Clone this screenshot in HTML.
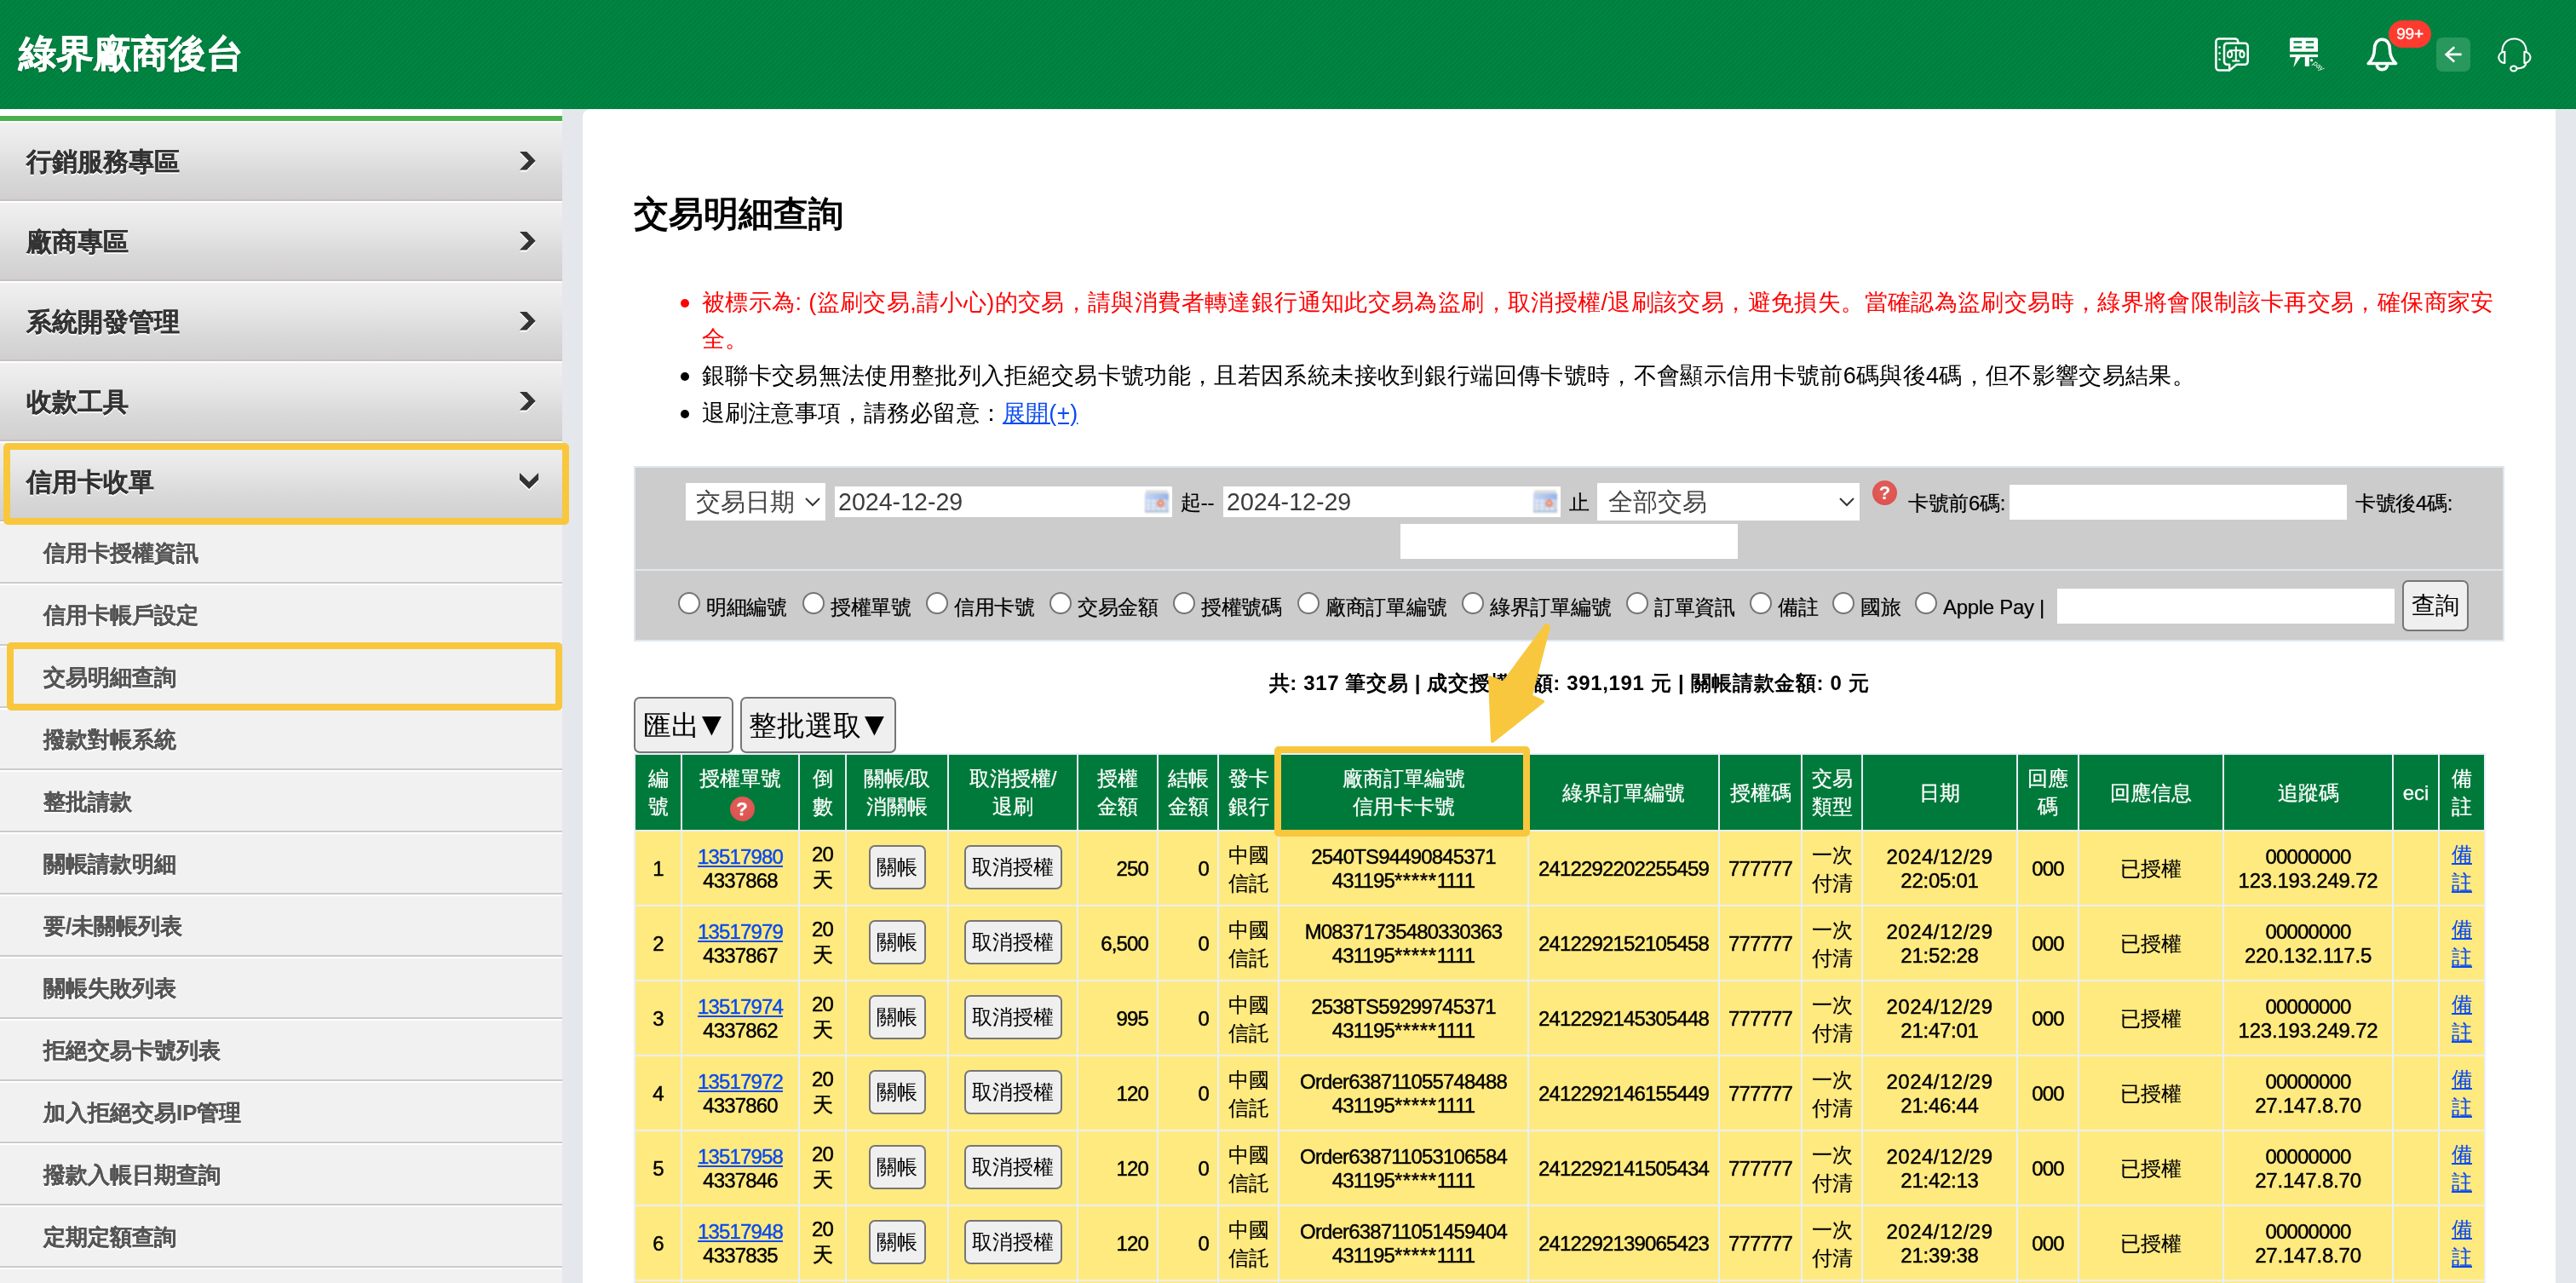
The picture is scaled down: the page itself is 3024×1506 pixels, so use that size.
<!DOCTYPE html><html lang="zh-Hant-TW"><head><meta charset="utf-8"><title>交易明細查詢</title><style>
*{box-sizing:border-box;margin:0;padding:0}
html,body{width:3024px;height:1506px;background:#fff}
body{font-family:"Liberation Sans",sans-serif;color:#000}
#page{position:relative;width:3024px;height:1506px;overflow:hidden;background:#fff;will-change:transform}
.a{position:absolute;white-space:nowrap}
#hdr{left:0;top:0;width:3024px;height:128px;background:#008140 repeating-linear-gradient(135deg,#007e3e 0,#007e3e 2.12px,#008542 2.12px,#008542 4.24px)}
#ttl{left:22px;top:30px;height:66px;line-height:66px;font-size:44.4px;font-weight:bold;color:#fff;text-shadow:0 1px 2px rgba(0,60,20,.45);-webkit-text-stroke:0.5px #fff}
#side{left:0;top:128px;width:660px;height:1378px;background:#f1f1f1;overflow:hidden}
#sidetop{left:0;top:0;width:660px;height:8px;background:#fff}
#sideln{left:0;top:8px;width:660px;height:6px;background:#48b14b}
.mi{left:0;width:660px;height:94px;background:linear-gradient(#f0f0f0 0,#e6e6e6 35%,#d9d8d8 70%,#d1cfcf 100%);border-top:2px solid #fff;border-bottom:2px solid #c4c2c2}
.mi span{left:31px;top:0;height:92px;line-height:92px;font-size:29.7px;font-weight:bold;color:#333;text-shadow:0 2px 0 #fff;-webkit-text-stroke:0.25px #333}
.mi svg{position:absolute}
.si{left:0;width:660px;height:73px;background:#f1f1f1;border-top:2px solid #fff;border-bottom:2px solid #cbcbcb}
.si span{left:51px;top:0;height:71px;line-height:71px;font-size:25.7px;font-weight:bold;color:#555;text-shadow:0 2px 0 #fff;-webkit-text-stroke:0.2px #555}
.hl{border:8px solid #f8c73e;border-radius:5px}
#gap{left:660px;top:128px;width:40px;height:1378px;background:#e4e7eb}
#rstrip{left:3000px;top:128px;width:24px;height:1378px;background:#e4e7eb}
#main{left:684px;top:128px;width:2316px;height:1378px;background:#fff;border-top-left-radius:9px}
#h2{left:744px;top:221px;height:60px;line-height:60px;font-size:40.6px;font-weight:bold}
.nt{left:824px;height:44px;line-height:44px;font-size:27px}
.dot{width:10px;height:10px;border-radius:5px;left:799px}
a,.lk{color:#0a4af0;text-decoration:underline}
#ft{left:744px;top:547px;width:2196px;height:206px;background:#dfe6ef}
.fc{left:2px;width:2192px;background:#ccc}
.wb{background:#fff}
.t24{font-size:24px;height:34px;line-height:34px;letter-spacing:-0.3px;-webkit-text-stroke:0.2px}
.rd{width:26px;height:26px;border-radius:13px;background:#fff;border:2px solid #757575}
.btn{background:#efefef;border:2px solid #767676;border-radius:7px;text-align:center}
#sum{left:1242px;width:1200px;text-align:center;top:784px;height:36px;line-height:36px;font-size:24px;font-weight:bold;letter-spacing:0.65px}
table{position:absolute;left:744px;top:884px;border-collapse:separate;border-spacing:2px;table-layout:fixed;width:2174px;background:#e9eff9;font-size:24px}
th,td{padding:0;text-align:center;vertical-align:middle;overflow:hidden;white-space:nowrap;font-weight:normal}
th{background:#007a3b;color:#fff;height:88px;line-height:33px;-webkit-text-stroke:0.25px #fff}
td{background:#ffea80;height:86px;padding-top:2px;line-height:28px;letter-spacing:-0.85px;-webkit-text-stroke:0.45px}
td.r{text-align:right;padding-right:10px}
td.c{padding-top:1px;line-height:33px;letter-spacing:0;-webkit-text-stroke:0.15px}
td.m{line-height:30px;padding-top:0;padding-bottom:2px}
td .btn{-webkit-text-stroke:0;position:relative;top:-2px;display:inline-block;height:52px;line-height:47px;vertical-align:middle;letter-spacing:0;font-size:24px}
.q{display:inline-block;border-radius:50%;background:radial-gradient(circle at 50% 35%,#e2605c,#d94f4c);color:#fff;font-weight:bold;text-align:center}
</style></head><body><div id="page">
<div id="hdr" class="a"><div id="ttl" class="a">綠界廠商後台</div>
<svg class="a" style="left:2600px;top:44px" width="40" height="40" viewBox="0 0 40 40" fill="none" stroke="#fff" stroke-width="2.5" stroke-linejoin="round"><path d="M27.2 6 V5 a3.6 3.6 0 0 0 -3.6 -3.6 H5 a3.6 3.6 0 0 0 -3.6 3.6 V35 a3.6 3.6 0 0 0 3.6 3.6 H17"/><path d="M14.5 6.7 H35.2 a3.5 3.5 0 0 1 3.5 3.5 V28.3 a3.5 3.5 0 0 1 -3.5 3.5 H25.5 L17.2 38.6 V31.8 H14.5 a3.5 3.5 0 0 1 -3.5 -3.5 V10.2 a3.5 3.5 0 0 1 3.5 -3.5 Z"/><g stroke="none" fill="#fff"><circle cx="5.6" cy="11.5" r="1.3"/><circle cx="5.6" cy="18.6" r="1.3"/><circle cx="5.6" cy="25.8" r="1.3"/></g><g stroke-width="2"><path d="M24.8 10.5 V27.5 M16.8 15.3 H33.4 M20.3 27.6 H29.3"/><ellipse cx="17.6" cy="19.8" rx="2.6" ry="3.6"/><ellipse cx="32" cy="19.8" rx="2.6" ry="3.6"/></g></svg>
<svg class="a" style="left:2688px;top:44px" width="42" height="42" viewBox="0 0 42 42" fill="#fff"><path fill-rule="evenodd" d="M2.2 0.2 H30.8 a2.2 2.2 0 0 1 2.2 2.2 V16.7 H0 V2.4 a2.2 2.2 0 0 1 2.2 -2.2 Z M4.5 4.2 H14.2 V6.5 H4.5 Z M18.8 4.2 H28.2 V6.5 H18.8 Z M4.5 10.4 H14.2 V12.7 H4.5 Z M18.8 10.4 H28.2 V12.7 H18.8 Z"/><rect x="0" y="19.9" width="33" height="3.2"/><path d="M7 23 H12.6 L4.3 35.2 Z"/><rect x="17.8" y="23" width="5" height="10.8"/><circle cx="25.6" cy="26.7" r="1.6"/><text x="0" y="0" transform="translate(26.8 31.2) rotate(38)" font-family="Liberation Sans, sans-serif" font-style="italic" font-size="8.6">pay</text></svg>
<svg class="a" style="left:2778px;top:44px" width="40" height="42" viewBox="0 0 40 42" fill="none" stroke="#fff" stroke-width="3.6" stroke-linejoin="round" stroke-linecap="round"><path d="M18.4 2.2 C12.4 2.2 9.4 7.6 9.4 13.6 C9.4 21.8 7 26.2 2.2 30.5 H34.6 C29.8 26.2 27.4 21.8 27.4 13.6 C27.4 7.6 24.4 2.2 18.4 2.2 Z"/><path d="M12.4 33 A6.2 6.2 0 0 0 24.4 33"/></svg>
<div class="a" style="left:2804px;top:24px;width:50px;height:32px;border-radius:16px;background:#ff3b30;color:#fff;font-size:19px;line-height:32px;text-align:center;letter-spacing:-0.2px;-webkit-text-stroke:0.4px #fff">99+</div>
<div class="a" style="left:2860px;top:44px;width:40px;height:40px;border-radius:7px;background:#28985d"></div>
<svg class="a" style="left:2860px;top:44px" width="40" height="40" viewBox="0 0 40 40" fill="none" stroke="#fff" stroke-width="2.6"><path d="M29.6 19.9 H12 M21.2 11.3 L11.6 19.9 L21.2 28.5"/></svg>
<svg class="a" style="left:2932px;top:44px" width="42" height="42" viewBox="0 0 42 42" fill="none" stroke="#fff" stroke-width="2.1"><path d="M5.3 17 C5.3 7.5 11 1.5 19.5 1.5 C28 1.5 33.7 7.5 33.7 17"/><path d="M8.3 16.7 V30 A7.1 6.65 0 0 1 8.3 16.7 Z M31.4 16.7 V30 A7.1 6.65 0 0 0 31.4 16.7 Z" stroke-linejoin="round"/><path d="M33.2 29.6 C33.2 34 30 36.4 22.4 36.4"/><ellipse cx="18.8" cy="36.5" rx="3.6" ry="3"/></svg>

</div>
<div id="side" class="a"><div id="sidetop" class="a"></div><div id="sideln" class="a"></div>
<div class="a mi" style="top:14px"><span class="a">行銷服務專區</span><svg style="left:610px;top:34px" width="20" height="25" viewBox="0 0 20 25"><path d="M0 0 L8.3 0 L18.7 10.7 L8.3 21.5 L0 21.5 L10.5 10.7 Z" transform="translate(0 2)" fill="#fff"/><path d="M0 0 L8.3 0 L18.7 10.7 L8.3 21.5 L0 21.5 L10.5 10.7 Z" fill="#333"/></svg></div>
<div class="a mi" style="top:108px"><span class="a">廠商專區</span><svg style="left:610px;top:34px" width="20" height="25" viewBox="0 0 20 25"><path d="M0 0 L8.3 0 L18.7 10.7 L8.3 21.5 L0 21.5 L10.5 10.7 Z" transform="translate(0 2)" fill="#fff"/><path d="M0 0 L8.3 0 L18.7 10.7 L8.3 21.5 L0 21.5 L10.5 10.7 Z" fill="#333"/></svg></div>
<div class="a mi" style="top:202px"><span class="a">系統開發管理</span><svg style="left:610px;top:34px" width="20" height="25" viewBox="0 0 20 25"><path d="M0 0 L8.3 0 L18.7 10.7 L8.3 21.5 L0 21.5 L10.5 10.7 Z" transform="translate(0 2)" fill="#fff"/><path d="M0 0 L8.3 0 L18.7 10.7 L8.3 21.5 L0 21.5 L10.5 10.7 Z" fill="#333"/></svg></div>
<div class="a mi" style="top:296px"><span class="a">收款工具</span><svg style="left:610px;top:34px" width="20" height="25" viewBox="0 0 20 25"><path d="M0 0 L8.3 0 L18.7 10.7 L8.3 21.5 L0 21.5 L10.5 10.7 Z" transform="translate(0 2)" fill="#fff"/><path d="M0 0 L8.3 0 L18.7 10.7 L8.3 21.5 L0 21.5 L10.5 10.7 Z" fill="#333"/></svg></div>
<div class="a mi" style="top:390px"><span class="a">信用卡收單</span><svg style="left:610px;top:35px" width="23" height="23" viewBox="0 0 23 23"><path d="M0 0 L11.1 10.7 L22.1 0 L22.1 8.2 L11.1 19.1 L0 8.2 Z" transform="translate(0 2)" fill="#fff"/><path d="M0 0 L11.1 10.7 L22.1 0 L22.1 8.2 L11.1 19.1 L0 8.2 Z" fill="#333"/></svg></div>
<div class="a si" style="top:484px"><span class="a">信用卡授權資訊</span></div>
<div class="a si" style="top:557px"><span class="a">信用卡帳戶設定</span></div>
<div class="a si" style="top:630px"><span class="a">交易明細查詢</span></div>
<div class="a si" style="top:703px"><span class="a">撥款對帳系統</span></div>
<div class="a si" style="top:776px"><span class="a">整批請款</span></div>
<div class="a si" style="top:849px"><span class="a">關帳請款明細</span></div>
<div class="a si" style="top:922px"><span class="a">要/未關帳列表</span></div>
<div class="a si" style="top:995px"><span class="a">關帳失敗列表</span></div>
<div class="a si" style="top:1068px"><span class="a">拒絕交易卡號列表</span></div>
<div class="a si" style="top:1141px"><span class="a">加入拒絕交易IP管理</span></div>
<div class="a si" style="top:1214px"><span class="a">撥款入帳日期查詢</span></div>
<div class="a si" style="top:1287px"><span class="a">定期定額查詢</span></div>
<div class="a si" style="top:1360px"><span class="a"></span></div>
</div>
<div id="gap" class="a"></div><div id="rstrip" class="a"></div>
<div id="main" class="a"></div>
<div class="a hl" style="left:4px;top:520px;width:664px;height:96px"></div>
<div class="a hl" style="left:8px;top:754px;width:652px;height:80px"></div>
<div id="h2" class="a">交易明細查詢</div>
<div class="a dot" style="top:351px;background:#f00"></div><div class="a nt" style="top:333px;color:#f00;letter-spacing:0.380px">被標示為: (盜刷交易,請小心)的交易，請與消費者轉達銀行通知此交易為盜刷，取消授權/退刷該交易，避免損失。當確認為盜刷交易時，綠界將會限制該卡再交易，確保商家安</div>
<div class="a nt" style="top:376px;color:#f00;letter-spacing:0.000px">全。</div>
<div class="a dot" style="top:437px;background:#000"></div><div class="a nt" style="top:419px;color:#000;letter-spacing:0.340px">銀聯卡交易無法使用整批列入拒絕交易卡號功能，且若因系統未接收到銀行端回傳卡號時，不會顯示信用卡號前6碼與後4碼，但不影響交易結果。</div>
<div class="a dot" style="top:481px;background:#000"></div><div class="a nt" style="top:463px;color:#000;letter-spacing:0.150px">退刷注意事項，請務必留意：<span class="lk">展開(+)</span></div>
<div id="ft" class="a">
<div class="a fc" style="top:2px;height:119px">
<div class="a wb" style="left:59px;top:18px;width:164px;height:44px"><div class="a" style="left:12px;top:0;height:44px;line-height:44px;font-size:29px;color:#444">交易日期</div><svg class="a" style="left:139px;top:15px" width="20" height="14" viewBox="0 0 20 14"><path d="M2 3 L10 11 L18 3" fill="none" stroke="#333" stroke-width="2"/></svg></div>
<div class="a wb" style="left:234px;top:22px;width:396px;height:36px"><div class="a" style="left:4px;top:0;height:36px;line-height:37px;font-size:28.6px;color:#3c3c3c">2024-12-29</div><svg class="a" style="left:363px;top:4px;filter:blur(0.8px)" width="30" height="28" viewBox="0 0 30 28"><defs><linearGradient id="cg" x1="0" y1="0" x2="1" y2="0"><stop offset="0" stop-color="#c6d6f6"/><stop offset="1" stop-color="#93b2ea"/></linearGradient></defs><rect x="2" y="0.5" width="26" height="5" fill="#d9dcdb"/><rect x="1" y="4.5" width="28" height="22" fill="#c5d3ea"/><rect x="1" y="4.5" width="28" height="7" fill="url(#cg)"/><rect x="1" y="23.5" width="28" height="3" fill="#b3c2d6"/><g fill="#e4ebf8"><rect x="3" y="11.5" width="4" height="3"/><rect x="9" y="11.5" width="4" height="3"/><rect x="15" y="11.5" width="4" height="3"/><rect x="21" y="11.5" width="4" height="3"/><rect x="3" y="16.5" width="4" height="3"/><rect x="9" y="16.5" width="4" height="3"/><rect x="3" y="21" width="4" height="3"/><rect x="9" y="21" width="4" height="3"/><rect x="15" y="21" width="4" height="3"/><rect x="21" y="21" width="4" height="3"/></g><circle cx="19.6" cy="15.6" r="4.3" fill="#ea8a6e"/><circle cx="19.6" cy="15.6" r="1.4" fill="#fce9e0"/></svg></div>
<div class="a t24" style="left:640px;top:24px">起--</div>
<div class="a wb" style="left:690px;top:22px;width:396px;height:36px"><div class="a" style="left:4px;top:0;height:36px;line-height:37px;font-size:28.6px;color:#3c3c3c">2024-12-29</div><svg class="a" style="left:363px;top:4px;filter:blur(0.8px)" width="30" height="28" viewBox="0 0 30 28"><defs><linearGradient id="cg2" x1="0" y1="0" x2="1" y2="0"><stop offset="0" stop-color="#c6d6f6"/><stop offset="1" stop-color="#93b2ea"/></linearGradient></defs><rect x="2" y="0.5" width="26" height="5" fill="#d9dcdb"/><rect x="1" y="4.5" width="28" height="22" fill="#c5d3ea"/><rect x="1" y="4.5" width="28" height="7" fill="url(#cg2)"/><rect x="1" y="23.5" width="28" height="3" fill="#b3c2d6"/><g fill="#e4ebf8"><rect x="3" y="11.5" width="4" height="3"/><rect x="9" y="11.5" width="4" height="3"/><rect x="15" y="11.5" width="4" height="3"/><rect x="21" y="11.5" width="4" height="3"/><rect x="3" y="16.5" width="4" height="3"/><rect x="9" y="16.5" width="4" height="3"/><rect x="3" y="21" width="4" height="3"/><rect x="9" y="21" width="4" height="3"/><rect x="15" y="21" width="4" height="3"/><rect x="21" y="21" width="4" height="3"/></g><circle cx="19.6" cy="15.6" r="4.3" fill="#ea8a6e"/><circle cx="19.6" cy="15.6" r="1.4" fill="#fce9e0"/></svg></div>
<div class="a t24" style="left:1096px;top:24px">止</div>
<div class="a wb" style="left:1129px;top:18px;width:308px;height:44px"><div class="a" style="left:13px;top:0;height:44px;line-height:44px;font-size:29px;color:#444">全部交易</div><svg class="a" style="left:283px;top:15px" width="20" height="14" viewBox="0 0 20 14"><path d="M2 3 L10 11 L18 3" fill="none" stroke="#333" stroke-width="2"/></svg></div>
<div class="a q" style="left:1452px;top:15px;width:29px;height:29px;line-height:29px;font-size:22px">?</div>
<div class="a t24" style="left:1494px;top:25px">卡號前6碼:</div>
<div class="a wb" style="left:1613px;top:20px;width:396px;height:41px"></div>
<div class="a t24" style="left:2019px;top:25px">卡號後4碼:</div>
<div class="a wb" style="left:898px;top:66px;width:396px;height:41px"></div>
</div>
<div class="a fc" style="top:123px;height:81px">
<div class="a rd" style="left:50px;top:25px"></div><div class="a t24" style="left:83px;top:26px">明細編號</div>
<div class="a rd" style="left:196px;top:25px"></div><div class="a t24" style="left:229px;top:26px">授權單號</div>
<div class="a rd" style="left:341px;top:25px"></div><div class="a t24" style="left:374px;top:26px">信用卡號</div>
<div class="a rd" style="left:486px;top:25px"></div><div class="a t24" style="left:519px;top:26px">交易金額</div>
<div class="a rd" style="left:631px;top:25px"></div><div class="a t24" style="left:664px;top:26px">授權號碼</div>
<div class="a rd" style="left:777px;top:25px"></div><div class="a t24" style="left:810px;top:26px">廠商訂單編號</div>
<div class="a rd" style="left:970px;top:25px"></div><div class="a t24" style="left:1003px;top:26px">綠界訂單編號</div>
<div class="a rd" style="left:1163px;top:25px"></div><div class="a t24" style="left:1196px;top:26px">訂單資訊</div>
<div class="a rd" style="left:1308px;top:25px"></div><div class="a t24" style="left:1341px;top:26px">備註</div>
<div class="a rd" style="left:1405px;top:25px"></div><div class="a t24" style="left:1438px;top:26px">國旅</div>
<div class="a rd" style="left:1502px;top:25px"></div><div class="a t24" style="left:1535px;top:26px">Apple Pay |</div>
<div class="a wb" style="left:1669px;top:21px;width:396px;height:41px"></div>
<div class="a btn" style="left:2074px;top:11px;width:78px;height:60px;line-height:56px;font-size:28px">查詢</div>
</div>
</div>
<div id="sum" class="a">共: 317 筆交易 | 成交授權金額: 391,191 元 | 關帳請款金額: 0 元</div>
<div class="a btn" style="left:744px;top:818px;width:117px;height:66px;line-height:65px;font-size:32.5px;text-align:left;padding-left:9px">匯出<svg class="a" style="left:78px;top:21px" width="23" height="23" viewBox="0 0 23 23"><path d="M0 0 H22.8 L11.4 22.4 Z" fill="#000"/></svg></div>
<div class="a btn" style="left:869px;top:818px;width:183px;height:66px;line-height:65px;font-size:32.5px;text-align:left;padding-left:8px">整批選取<svg class="a" style="left:144px;top:21px" width="23" height="23" viewBox="0 0 23 23"><path d="M0 0 H22.8 L11.4 22.4 Z" fill="#000"/></svg></div>
<table><colgroup><col style="width:53px"><col style="width:136px"><col style="width:53px"><col style="width:118px"><col style="width:150px"><col style="width:92px"><col style="width:69px"><col style="width:69px"><col style="width:291px"><col style="width:222px"><col style="width:95px"><col style="width:69px"><col style="width:180px"><col style="width:70px"><col style="width:168px"><col style="width:197px"><col style="width:52px"><col style="width:52px"></colgroup>
<tr><th>編<br>號</th><th>授權單號<br><span class="q" style="width:29px;height:29px;line-height:29px;font-size:22px;vertical-align:-2px;margin-left:4px">?</span></th><th>倒<br>數</th><th>關帳/取<br>消關帳</th><th>取消授權/<br>退刷</th><th>授權<br>金額</th><th>結帳<br>金額</th><th>發卡<br>銀行</th><th>廠商訂單編號<br>信用卡卡號</th><th>綠界訂單編號</th><th>授權碼</th><th>交易<br>類型</th><th>日期</th><th>回應<br>碼</th><th>回應信息</th><th>追蹤碼</th><th>eci</th><th>備<br>註</th></tr>
<tr><td>1</td><td><span class="lk">13517980</span><br>4337868</td><td class="m">20<br>天</td><td><span class="btn" style="width:67px">關帳</span></td><td><span class="btn" style="width:115px">取消授權</span></td><td class="r">250</td><td class="r">0</td><td class="c">中國<br>信託</td><td>2540TS94490845371<br>431195<span style="letter-spacing:0.6px">*****</span>1111</td><td>2412292202255459</td><td>777777</td><td class="c">一次<br>付清</td><td><span style="letter-spacing:0.5px">2024/12/29</span><br><span style="letter-spacing:-0.25px">22:05:01</span></td><td>000</td><td class="c">已授權</td><td>00000000<br><span style="letter-spacing:-0.2px">123.193.249.72</span></td><td></td><td class="c" style="padding-top:0;padding-bottom:1px"><span class="lk">備<br>註</span></td></tr>
<tr><td>2</td><td><span class="lk">13517979</span><br>4337867</td><td class="m">20<br>天</td><td><span class="btn" style="width:67px">關帳</span></td><td><span class="btn" style="width:115px">取消授權</span></td><td class="r">6,500</td><td class="r">0</td><td class="c">中國<br>信託</td><td>M08371735480330363<br>431195<span style="letter-spacing:0.6px">*****</span>1111</td><td>2412292152105458</td><td>777777</td><td class="c">一次<br>付清</td><td><span style="letter-spacing:0.5px">2024/12/29</span><br><span style="letter-spacing:-0.25px">21:52:28</span></td><td>000</td><td class="c">已授權</td><td>00000000<br><span style="letter-spacing:-0.2px">220.132.117.5</span></td><td></td><td class="c" style="padding-top:0;padding-bottom:1px"><span class="lk">備<br>註</span></td></tr>
<tr><td>3</td><td><span class="lk">13517974</span><br>4337862</td><td class="m">20<br>天</td><td><span class="btn" style="width:67px">關帳</span></td><td><span class="btn" style="width:115px">取消授權</span></td><td class="r">995</td><td class="r">0</td><td class="c">中國<br>信託</td><td>2538TS59299745371<br>431195<span style="letter-spacing:0.6px">*****</span>1111</td><td>2412292145305448</td><td>777777</td><td class="c">一次<br>付清</td><td><span style="letter-spacing:0.5px">2024/12/29</span><br><span style="letter-spacing:-0.25px">21:47:01</span></td><td>000</td><td class="c">已授權</td><td>00000000<br><span style="letter-spacing:-0.2px">123.193.249.72</span></td><td></td><td class="c" style="padding-top:0;padding-bottom:1px"><span class="lk">備<br>註</span></td></tr>
<tr><td>4</td><td><span class="lk">13517972</span><br>4337860</td><td class="m">20<br>天</td><td><span class="btn" style="width:67px">關帳</span></td><td><span class="btn" style="width:115px">取消授權</span></td><td class="r">120</td><td class="r">0</td><td class="c">中國<br>信託</td><td>Order638711055748488<br>431195<span style="letter-spacing:0.6px">*****</span>1111</td><td>2412292146155449</td><td>777777</td><td class="c">一次<br>付清</td><td><span style="letter-spacing:0.5px">2024/12/29</span><br><span style="letter-spacing:-0.25px">21:46:44</span></td><td>000</td><td class="c">已授權</td><td>00000000<br><span style="letter-spacing:-0.2px">27.147.8.70</span></td><td></td><td class="c" style="padding-top:0;padding-bottom:1px"><span class="lk">備<br>註</span></td></tr>
<tr><td>5</td><td><span class="lk">13517958</span><br>4337846</td><td class="m">20<br>天</td><td><span class="btn" style="width:67px">關帳</span></td><td><span class="btn" style="width:115px">取消授權</span></td><td class="r">120</td><td class="r">0</td><td class="c">中國<br>信託</td><td>Order638711053106584<br>431195<span style="letter-spacing:0.6px">*****</span>1111</td><td>2412292141505434</td><td>777777</td><td class="c">一次<br>付清</td><td><span style="letter-spacing:0.5px">2024/12/29</span><br><span style="letter-spacing:-0.25px">21:42:13</span></td><td>000</td><td class="c">已授權</td><td>00000000<br><span style="letter-spacing:-0.2px">27.147.8.70</span></td><td></td><td class="c" style="padding-top:0;padding-bottom:1px"><span class="lk">備<br>註</span></td></tr>
<tr><td>6</td><td><span class="lk">13517948</span><br>4337835</td><td class="m">20<br>天</td><td><span class="btn" style="width:67px">關帳</span></td><td><span class="btn" style="width:115px">取消授權</span></td><td class="r">120</td><td class="r">0</td><td class="c">中國<br>信託</td><td>Order638711051459404<br>431195<span style="letter-spacing:0.6px">*****</span>1111</td><td>2412292139065423</td><td>777777</td><td class="c">一次<br>付清</td><td><span style="letter-spacing:0.5px">2024/12/29</span><br><span style="letter-spacing:-0.25px">21:39:38</span></td><td>000</td><td class="c">已授權</td><td>00000000<br><span style="letter-spacing:-0.2px">27.147.8.70</span></td><td></td><td class="c" style="padding-top:0;padding-bottom:1px"><span class="lk">備<br>註</span></td></tr>
<tr><td></td><td></td><td></td><td></td><td></td><td></td><td></td><td></td><td></td><td></td><td></td><td></td><td></td><td></td><td></td><td></td><td></td><td></td></tr>
</table>
<div class="a hl" style="left:1496px;top:876px;width:300px;height:106px"></div>
<svg class="a" style="left:1730px;top:720px" width="110" height="170" viewBox="1730 720 110 170"><path d="M1815 734 L1818 735.5 L1797 817 L1811 823.5 L1752 870 L1749 795 L1765 801.5 Z" fill="#f8c73e" stroke="#f8c73e" stroke-width="4" stroke-linejoin="round"/></svg>
</div></body></html>
